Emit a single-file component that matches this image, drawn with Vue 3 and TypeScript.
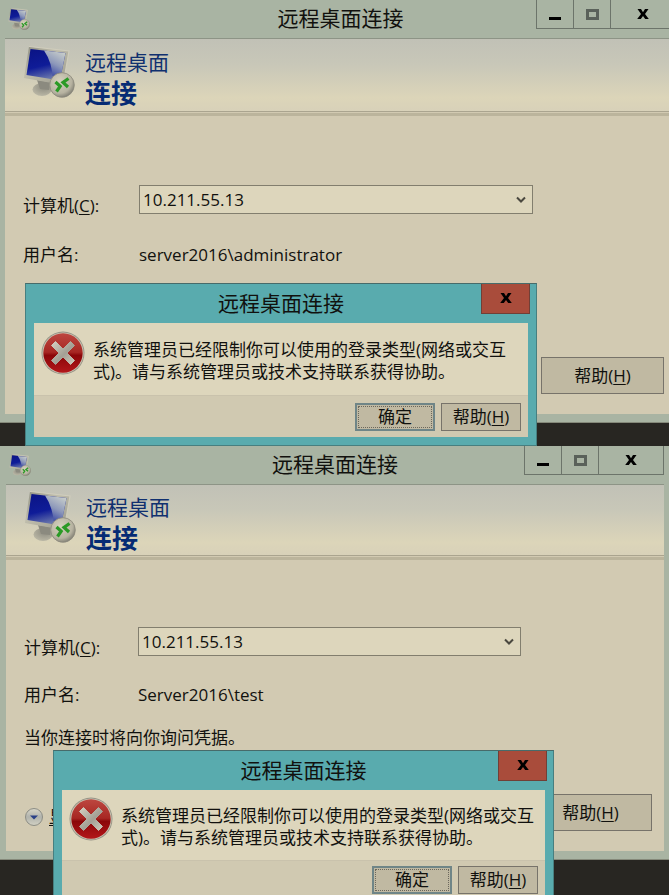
<script setup lang="ts">
interface Session {
  id: string
  computer: string
  user: string
  note?: string
  expandable: boolean
}

const sessions: Session[] = [
  { id: 'first', computer: '10.211.55.13', user: 'server2016\\administrator', expandable: false },
  {
    id: 'second',
    computer: '10.211.55.13',
    user: 'Server2016\\test',
    note: '当你连接时将向你询问凭据。',
    expandable: true,
  },
]

const title = '远程桌面连接'
const message =
  '系统管理员已经限制你可以使用的登录类型(网络或交互式)。请与系统管理员或技术支持联系获得协助。'
</script>

<template>
  <svg class="defs" aria-hidden="true">
    <defs>
      <linearGradient id="screen" x1="0" y1="0" x2="0.3" y2="1">
        <stop offset="0" stop-color="#0a1384" />
        <stop offset="0.6" stop-color="#0f1c98" />
        <stop offset="1" stop-color="#6673ab" />
      </linearGradient>
      <linearGradient id="glare" x1="0.7" y1="0" x2="0.3" y2="1">
        <stop offset="0" stop-color="#c6ccca" />
        <stop offset="0.45" stop-color="#8d98ba" />
        <stop offset="1" stop-color="#1c2c9c" />
      </linearGradient>
      <linearGradient id="bezel" x1="0" y1="0" x2="1" y2="1">
        <stop offset="0" stop-color="#8c8c80" />
        <stop offset="0.4" stop-color="#bfbdac" />
        <stop offset="1" stop-color="#9a998b" />
      </linearGradient>
      <radialGradient id="stand" cx="0.6" cy="0.3" r="0.7">
        <stop offset="0" stop-color="#8b8a7f" />
        <stop offset="1" stop-color="#b9b6a4" />
      </radialGradient>
      <radialGradient id="badge" cx="0.4" cy="0.35" r="0.65">
        <stop offset="0" stop-color="#d6d2be" />
        <stop offset="0.75" stop-color="#b7b3a1" />
        <stop offset="1" stop-color="#88867a" />
      </radialGradient>
      <linearGradient id="alarm" x1="0" y1="0" x2="0" y2="1">
        <stop offset="0" stop-color="#bd4740" />
        <stop offset="0.48" stop-color="#a72723" />
        <stop offset="0.56" stop-color="#8b0709" />
        <stop offset="1" stop-color="#b3171a" />
      </linearGradient>
      <linearGradient id="cross" x1="0" y1="0" x2="1" y2="1">
        <stop offset="0" stop-color="#d6d2c2" />
        <stop offset="0.55" stop-color="#a3a095" />
        <stop offset="1" stop-color="#d0ccbc" />
      </linearGradient>
      <linearGradient id="knob" x1="0" y1="0" x2="0" y2="1">
        <stop offset="0" stop-color="#d9d7c9" />
        <stop offset="0.5" stop-color="#b1b3ad" />
        <stop offset="1" stop-color="#d2d1c3" />
      </linearGradient>
      <symbol id="rdp" viewBox="0 0 52 52">
        <ellipse cx="19" cy="43.500" rx="9.500" ry="6.500" fill="url(#stand)" />
        <path d="M14 34 L27 36 L26 44 L17 43 Z" fill="#8b8a7f" />
        <path d="M6 0.500 L46 5 L40 39 L1 32 Z" fill="url(#bezel)" />
        <path d="M6 0.500 L46 5 L40 39" fill="none" stroke="#d0cdbc" stroke-width="1.200" />
        <path d="M7.500 3 L42.500 7 L37 34.500 L3.500 29 Z" fill="url(#screen)" />
        <path d="M21 4.500 L42.500 7 L37 34.500 L30 33.500 Q29 16 21 4.500 Z" fill="url(#glare)" />
        <circle cx="39" cy="39" r="12.300" fill="url(#badge)" stroke="#8b897c" stroke-width="0.800" />
        <path d="M32.500 36 L37.200 40.300 L33.500 45.500" fill="none" stroke="#2b9a26" stroke-width="3.200" />
        <path d="M45.500 32.500 L40 36.500 L45 41" fill="none" stroke="#2b9a26" stroke-width="3.200" />
      </symbol>
      <symbol id="close" viewBox="0 0 12 11">
        <path d="M0.500 0 H4 L6 3.300 L8 0 H11.500 L8 5 L11.800 10 H8.200 L6 6.900 L3.800 10 H0.200 L4 5 Z" fill="currentColor" />
      </symbol>
    </defs>
  </svg>

  <main class="page">
    <section v-for="s in sessions" :key="s.id" class="scene" :class="s.id">
      <article class="window">
        <header class="titlebar">
          <svg class="app-icon"><use href="#rdp" /></svg>
          <h1 class="title">{{ title }}</h1>
          <div class="captions">
            <button type="button" class="cap" aria-label="最小化">
              <svg width="12" height="11"><rect y="8" width="12" height="3" fill="#000" /></svg>
            </button>
            <button type="button" class="cap" aria-label="最大化">
              <svg width="13" height="11">
                <rect x="1.500" y="1.500" width="10" height="8" fill="none" stroke="#5a615a" stroke-width="3" />
              </svg>
            </button>
            <button type="button" class="cap wide" aria-label="关闭">
              <svg width="12" height="11"><use href="#close" /></svg>
            </button>
          </div>
        </header>

        <div class="client">
          <div class="banner">
            <svg class="banner-icon"><use href="#rdp" /></svg>
            <p class="brand">远程桌面<strong>连接</strong></p>
          </div>
          <div class="rule"></div>

          <form class="form" @submit.prevent>
            <div class="fields">
              <label class="label low" :for="`computer-${s.id}`">计算机(<u>C</u>):</label>
              <div class="combo">
                <select :id="`computer-${s.id}`">
                  <option>{{ s.computer }}</option>
                </select>
                <svg class="chevron" width="10" height="8">
                  <path d="M1 1.500 L5 5.500 L9 1.500" fill="none" stroke="#4a483f" stroke-width="2" />
                </svg>
              </div>
              <span class="label">用户名:</span>
              <span class="user">{{ s.user }}</span>
            </div>
            <p v-if="s.note" class="note">{{ s.note }}</p>

            <div class="actions">
              <button v-if="s.expandable" type="button" class="expand" aria-label="显示选项">
                <svg width="20" height="20">
                  <circle cx="10" cy="10" r="8.500" fill="url(#knob)" stroke="#8c8d85" />
                  <path d="M6 8.500 H14 L10 12.500 Z" fill="#293f87" />
                </svg>
                <u>显</u>
              </button>
              <button type="button" class="btn help">帮助(<u>H</u>)</button>
            </div>
          </form>
        </div>
      </article>

      <div class="dialog" role="alertdialog" :aria-labelledby="`dialog-${s.id}`">
        <header class="dialog-bar">
          <h2 :id="`dialog-${s.id}`" class="title">{{ title }}</h2>
          <button type="button" class="dialog-close" aria-label="关闭">
            <svg width="12" height="11"><use href="#close" /></svg>
          </button>
        </header>
        <div class="dialog-body">
          <svg class="error" viewBox="0 0 44 44">
            <circle cx="22" cy="22" r="21.500" fill="#969386" />
            <circle cx="22" cy="22" r="20.600" fill="#cbc6b3" />
            <circle cx="22" cy="22" r="19.700" fill="url(#alarm)" />
            <path
              d="M14.500 10.500 L22 18 L29.500 10.500 L33.500 14.500 L26 22 L33.500 29.500 L29.500 33.500 L22 26 L14.500 33.500 L10.500 29.500 L18 22 L10.500 14.500 Z"
              fill="url(#cross)" stroke="url(#cross)" stroke-linejoin="round"
            />
          </svg>
          <p class="message">{{ message }}</p>
        </div>
        <footer class="dialog-footer">
          <button type="button" class="btn small primary">确定</button>
          <button type="button" class="btn small">帮助(<u>H</u>)</button>
        </footer>
      </div>
    </section>
  </main>
</template>

<style>
body {
  margin: 0;
  background: #282622;
}
</style>

<style scoped>
.defs {
  display: block;
  width: 0;
  height: 0;
}
.page {
  font: 17px/22px 'Open Sans', 'Noto Sans CJK SC', sans-serif;
  color: #11110e;
  background: #282622;
}
.page * {
  box-sizing: border-box;
}
button,
select {
  font: inherit;
  color: inherit;
  margin: 0;
  padding: 0;
  border-radius: 0;
}
h1,
h2,
p {
  margin: 0;
}
u {
  text-underline-offset: 2px;
  text-decoration-thickness: 1px;
}
.scene {
  position: relative;
  overflow: hidden;
}
.first {
  padding-bottom: 23px;
}
.second {
  padding-bottom: 36px;
}
.window {
  padding: 0 5px 8px;
  background: #a9b4a3;
  border-bottom: 1px solid #85897a;
}
/* The first window runs past the right edge of the view. */
.first .window {
  margin-right: -12px;
}
.second .window {
  padding-left: 6px;
}
.titlebar {
  display: grid;
  grid-template-columns: 1fr auto 1fr;
  align-items: center;
  height: 38px;
}
.app-icon {
  width: 22px;
  height: 22px;
  margin-left: 3px;
}
.title {
  align-self: start;
  font-size: 21px;
  line-height: 36px;
  font-weight: 400;
}
.captions {
  display: flex;
  align-self: start;
  justify-self: end;
  height: 29px;
  border: 1px solid #6c746a;
  border-top: 0;
}
.cap {
  display: grid;
  place-items: center;
  width: 37px;
  border: 0;
  border-right: 1px solid #6c746a;
  background: none;
  color: #000;
}
.cap.wide {
  width: 64px;
  border-right: 0;
}
.client {
  border-top: 1px solid #8d9486;
  background: #d2cab2;
}
.banner {
  display: flex;
  gap: 10px;
  height: 72px;
  padding: 7px 18px 0;
  background: linear-gradient(#c1c1b6, #c8c7b8 35%, #dcd5b9 82%, #d8d1b9);
}
.second .banner {
  height: 70px;
  padding-top: 6px;
}
.banner-icon {
  width: 52px;
  height: 52px;
}
.brand {
  display: flex;
  flex-direction: column;
  font-size: 21px;
  line-height: 32px;
  color: #10306f;
}
.brand strong {
  font-size: 26px;
  line-height: 30px;
  color: #062b74;
}
.rule {
  height: 5px;
  border-top: 1px solid #aaa48f;
  border-bottom: 3px solid #bbb49c;
}
.form {
  display: flex;
  flex-direction: column;
  padding: 69px 12px 20px 18px;
}
.second .form {
  padding-top: 67px;
}
.fields {
  display: grid;
  grid-template-columns: 116px 1fr;
  row-gap: 27px;
  padding-right: 131px;
}
.second .fields {
  grid-template-columns: 114px 1fr;
  row-gap: 25px;
}
.low {
  height: 22px;
  margin-top: 10px;
}
.combo {
  display: flex;
  align-items: center;
  height: 29px;
}
.combo select {
  flex: 1;
  height: 29px;
  padding: 0 24px 0 3px;
  border: 1px solid #827e6e;
  background: #ddd6bc;
  appearance: none;
}
.chevron {
  margin-left: -17px;
  margin-right: 7px;
  pointer-events: none;
}
.note {
  margin-top: 21px;
}
.actions {
  display: flex;
  align-items: center;
  justify-content: space-between;
  margin-top: 91px;
}
.second .actions {
  margin-top: 45px;
}
.expand {
  display: flex;
  align-items: center;
  gap: 5px;
  padding-top: 8px;
  border: 0;
  background: none;
}
.btn {
  border: 1px solid #77736a;
  background: #c0b9a2;
}
.help {
  width: 123px;
  height: 37px;
  margin-left: auto;
}
.dialog {
  position: absolute;
  top: 283px;
  left: 25px;
  right: 132px;
  padding: 0 8px 8px;
  border: 1px solid #477f80;
  border-top-color: #476b6a;
  background: #59abae;
}
.second .dialog {
  top: 304px;
  left: 53px;
  right: 115px;
}
.dialog-bar {
  display: grid;
  grid-template-columns: 1fr auto 1fr;
  height: 39px;
}
.dialog-bar .title {
  grid-column: 2;
  line-height: 38px;
}
.dialog-close {
  display: grid;
  place-items: center;
  justify-self: end;
  width: 49px;
  height: 30px;
  margin-right: -2px;
  border: 1px solid #713f36;
  border-top: 0;
  background: #a94c3b;
  color: #000;
}
.dialog-body {
  display: flex;
  gap: 8px;
  min-height: 73px;
  padding: 8px 7px 0;
  background: #ddd6bc;
  border-bottom: 1px solid #c9c2ac;
}
.second .dialog-body {
  min-height: 71px;
  padding-top: 7px;
}
.error {
  flex: none;
  width: 44px;
  height: 44px;
}
.message {
  padding-top: 8px;
}
.dialog-footer {
  display: flex;
  justify-content: flex-end;
  gap: 6px;
  padding: 7px 7px 6px;
  background: #d0c9b1;
}
.second .dialog-footer {
  padding-top: 5px;
}
.small {
  width: 80px;
  height: 28px;
  line-height: 22px;
}
.primary {
  border: 2px solid #6f8587;
  outline: 1px dotted #6b675c;
  outline-offset: -4px;
}
</style>
